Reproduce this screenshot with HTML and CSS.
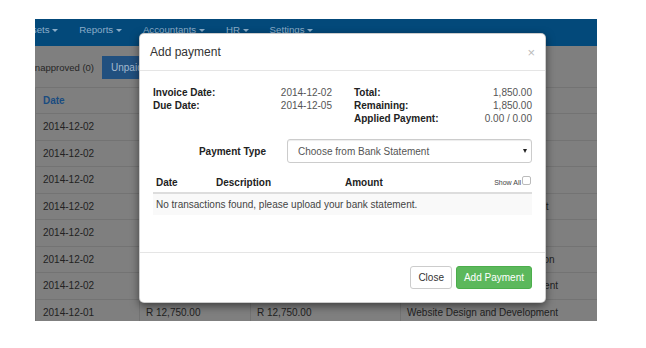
FILE: index.html
```html
<!DOCTYPE html>
<html lang="en">
<head>
    <meta charset="UTF-8">
    <meta name="viewport" content="width=device-width, initial-scale=1.0">
    <title>Add payment</title>
    <link rel="stylesheet" href="styles.css">
</head>
<body>
    <div class="app">
        <!-- Верхнее меню -->
        <nav class="navbar">
            <ul class="nav-menu">
                <li>Assets <b class="caret"></b></li>
                <li>Reports <b class="caret"></b></li>
                <li>Accountants <b class="caret"></b></li>
                <li>HR <b class="caret"></b></li>
                <li>Settings <b class="caret"></b></li>
            </ul>
        </nav>

        <div class="tabs">
            <span class="tab">Unapproved (0)</span>
            <span class="tab active">Unpaid (8)</span>
        </div>

        <table class="invoices">
            <colgroup>
                <col style="width: 104px">
                <col style="width: 111px">
                <col style="width: 150px">
                <col style="width: 197px">
            </colgroup>
            <thead>
                <tr><th>Date</th><th>Amount</th><th>Balance</th><th>Description</th></tr>
            </thead>
            <tbody>
                <tr><td>2014-12-02</td><td>R 1,850.00</td><td>R 1,850.00</td><td>Hosting</td></tr>
                <tr><td>2014-12-02</td><td>R 1,850.00</td><td>R 1,850.00</td><td>Hosting</td></tr>
                <tr><td>2014-12-02</td><td>R 1,850.00</td><td>R 1,850.00</td><td>Hosting</td></tr>
                <tr><td>2014-12-02</td><td>R 4,500.00</td><td>R 4,500.00</td><td>Website Design and Adjustment</td></tr>
                <tr><td>2014-12-02</td><td>R 1,850.00</td><td>R 1,850.00</td><td>Hosting</td></tr>
                <tr><td>2014-12-02</td><td>R 6,200.00</td><td>R 6,200.00</td><td>Website Design and Optimization</td></tr>
                <tr><td>2014-12-02</td><td>R 9,800.00</td><td>R 9,800.00</td><td>Website Design and Development</td></tr>
                <tr><td>2014-12-01</td><td>R 12,750.00</td><td>R 12,750.00</td><td>Website Design and Development</td></tr>
            </tbody>
        </table>

        <!-- Окно оплаты -->
        <div class="modal">
            <div class="modal-header">
                <h4 class="modal-title">Add payment</h4>
                <span class="close">&times;</span>
            </div>
            <div class="modal-body">
                <div class="info">
                    <div class="info-col">
                        <span class="label">Invoice Date:</span><span class="value">2014-12-02</span>
                        <span class="label">Due Date:</span><span class="value">2014-12-05</span>
                    </div>
                    <div class="info-col">
                        <span class="label">Total:</span><span class="value">1,850.00</span>
                        <span class="label">Remaining:</span><span class="value">1,850.00</span>
                        <span class="label">Applied Payment:</span><span class="value">0.00 / 0.00</span>
                    </div>
                </div>

                <div class="form-row">
                    <label for="payment-type">Payment Type</label>
                    <div class="select-wrap">
                        <select id="payment-type">
                            <option>Choose from Bank Statement</option>
                        </select>
                    </div>
                </div>

                <table class="transactions">
                    <colgroup>
                        <col style="width: 60px">
                        <col style="width: 129px">
                        <col style="width: 120px">
                        <col>
                    </colgroup>
                    <thead>
                        <tr>
                            <th>Date</th>
                            <th>Description</th>
                            <th>Amount</th>
                            <th class="show-all">Show All<input type="checkbox"></th>
                        </tr>
                    </thead>
                    <tbody>
                        <tr><td colspan="4">No transactions found, please upload your bank statement.</td></tr>
                    </tbody>
                </table>
            </div>
            <div class="modal-footer">
                <button class="btn">Close</button>
                <button class="btn btn-success">Add Payment</button>
            </div>
        </div>
    </div>
</body>
</html>
```

FILE: styles.css
```css
/* Страница */
body {
    margin: 0;
    background-color: #fff;
    font-family: "Liberation Sans", Arial, sans-serif;
    color: #333;
}

.app {
    position: relative;
    width: 562px;
    height: 302px;
    margin: 19px 0 0 35px;
    overflow: hidden;
    background-color: #7f7f7f; /* затемнено фоном окна */
}

/* Меню */
.navbar {
    height: 27px;
    background-color: #03497a;
}

.nav-menu {
    display: flex;
    list-style: none;
    margin: 0 0 0 -25px;
    padding: 0;
    white-space: nowrap;
}

.nav-menu li {
    padding: 1px 10.5px 0;
    line-height: 20px;
    font-size: 9.7px;
    color: #8badc9;
}

.caret {
    display: inline-block;
    width: 0;
    height: 0;
    vertical-align: middle;
    border-top: 3px solid;
    border-left: 3px solid transparent;
    border-right: 3px solid transparent;
}

/* Вкладки */
.tabs {
    display: flex;
    height: 23px;
    margin: 10px 0 0 -15px;
    white-space: nowrap;
}

.tab {
    padding: 0 8px;
    line-height: 24px;
    font-size: 9.5px;
    color: #262626;
}

.tab.active {
    padding: 0 40px 0 9px;
    background-color: #21507f;
    color: #a3b9cf;
    font-size: 10px;
}

/* Таблица счетов */
.invoices {
    width: 562px;
    margin-top: 8px;
    border-collapse: collapse;
    table-layout: fixed;
    font-size: 10px;
    color: #222;
}

.invoices th,
.invoices td {
    box-sizing: border-box;
    padding: 0 6px;
    border: 1px solid #737373;
    text-align: left;
    white-space: nowrap;
    overflow: hidden;
}

.invoices th {
    height: 26px;
    color: #1a4c80;
}

.invoices td {
    height: 26.5px;
}

.invoices td:first-child,
.invoices th:first-child {
    padding-left: 7px;
}

/* Модальное окно */
.modal {
    position: absolute;
    left: 104px;
    top: 14px;
    width: 407px;
    box-sizing: border-box;
    background-color: #fff;
    border: 1px solid rgba(0, 0, 0, 0.2);
    border-radius: 5px;
    box-shadow: 0 3px 9px rgba(0, 0, 0, 0.5);
}

.modal-header {
    display: flex;
    align-items: center;
    justify-content: space-between;
    height: 37px;
    box-sizing: border-box;
    padding: 0 10px;
    border-bottom: 1px solid #e5e5e5;
}

.modal-title {
    margin: 0;
    font-size: 12px;
    font-weight: normal;
    color: #333;
}

.close {
    font-size: 13px;
    color: #bbb;
    cursor: pointer;
}

.modal-body {
    padding: 15px 13px 37px;
}

.info {
    display: grid;
    grid-template-columns: 179px 1fr;
    column-gap: 22px;
}

.info-col {
    display: grid;
    grid-template-columns: 1fr auto;
    align-content: start;
    font-size: 10px;
    line-height: 13px;
}

.label {
    font-weight: bold;
    color: #222;
}

.value {
    text-align: right;
    color: #555;
}

.form-row {
    display: grid;
    grid-template-columns: 113px 1fr;
    column-gap: 21px;
    align-items: center;
    margin-top: 14px;
}

.form-row label {
    text-align: right;
    font-size: 10px;
    font-weight: bold;
    color: #222;
}

.select-wrap {
    position: relative;
}

.select-wrap::after {
    content: "";
    position: absolute;
    right: 5px;
    top: 10px;
    border-top: 4px solid #222;
    border-left: 2.5px solid transparent;
    border-right: 2.5px solid transparent;
}

.select-wrap select {
    display: block;
    width: 100%;
    height: 24px;
    padding: 0 10px;
    border: 1px solid #ccc;
    border-radius: 3px;
    box-shadow: inset 0 1px 1px rgba(0, 0, 0, 0.075);
    background-color: #fff;
    font-family: inherit;
    font-size: 10px;
    color: #555;
    -webkit-appearance: none;
    appearance: none;
}

.transactions {
    width: 100%;
    margin-top: 10px;
    border-collapse: collapse;
    table-layout: fixed;
    font-size: 10px;
}

.transactions th {
    padding: 3px;
    line-height: 13px;
    text-align: left;
    color: #222;
    border-bottom: 2px solid #ddd;
}

.transactions .show-all {
    padding-right: 1px;
    text-align: right;
    font-size: 7px;
    font-weight: normal;
    color: #444;
    white-space: nowrap;
}

.show-all input {
    width: 9px;
    height: 9px;
    margin: 0 0 0 1px;
    vertical-align: top;
    border: 1px solid #bbb;
    border-radius: 2px;
    background-color: #fff;
    -webkit-appearance: none;
    appearance: none;
}

.transactions td {
    padding: 4px 3px;
    line-height: 13px;
    background-color: #f9f9f9;
    color: #444;
}

.modal-footer {
    display: flex;
    justify-content: flex-end;
    gap: 4px;
    padding: 13px;
    border-top: 1px solid #e5e5e5;
}

.btn {
    height: 23px;
    padding: 0 7px;
    border: 1px solid #ccc;
    border-radius: 3px;
    background-color: #fff;
    font-family: inherit;
    font-size: 10px;
    color: #333;
    cursor: pointer;
}

.btn-success {
    background-color: #5cb85c;
    border-color: #4cae4c;
    color: #fff;
}

.btn-success:hover {
    background-color: #449d44; /* темнее при наведении */
}
```
